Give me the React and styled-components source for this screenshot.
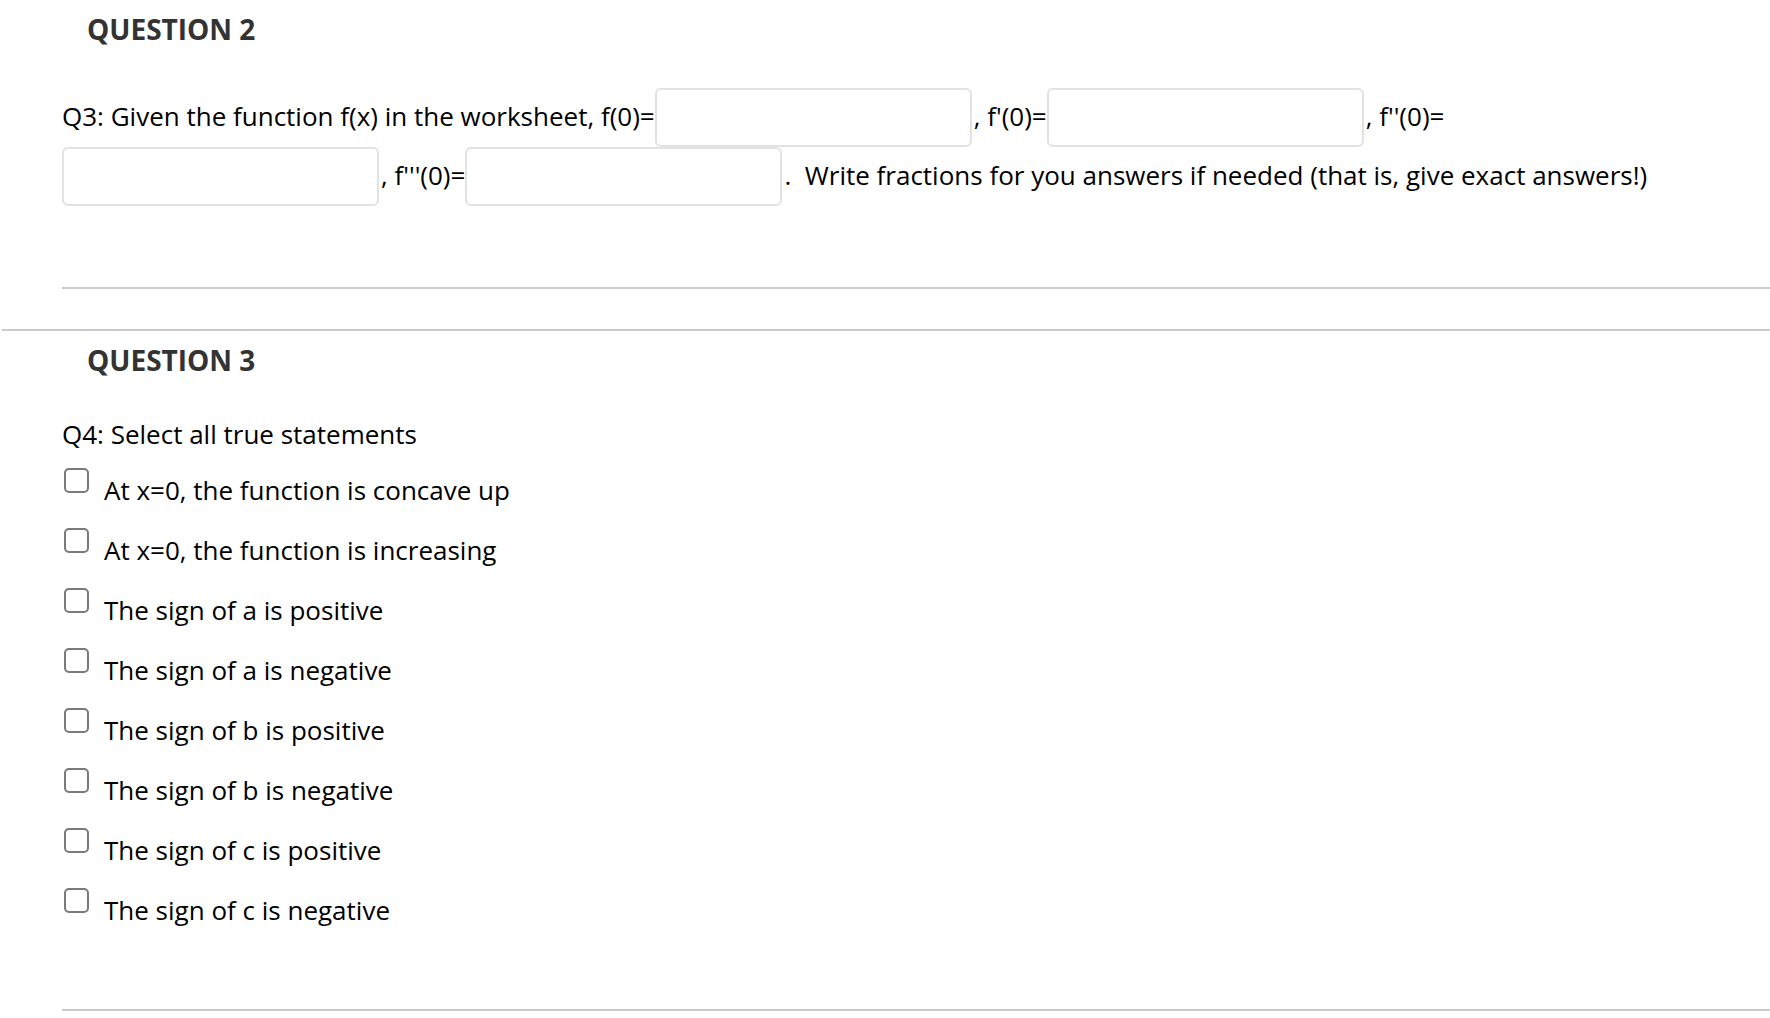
import React from 'react';
import styled, { createGlobalStyle } from 'styled-components';

const GlobalStyle = createGlobalStyle`
    html, body {
        margin: 0;
        padding: 0;
        background: #fff;
    }
    body {
        font-family: "Open Sans", "Liberation Sans", sans-serif;
        color: #000;
    }
`

const Page = styled.div`
    width: 1770px;
    overflow: hidden;
`

const Question = styled.section``

const Heading = styled.h2`
    margin: 10px 0 0 0;
    padding-left: 87px;
    font-size: 28px;
    font-weight: 700;
    line-height: normal;
    color: #333;
`

const Body = styled.div`
    padding-left: 62px;
`

const Prompt = styled.p`
    margin: ${props => props.$top}px 0 0 0;
    padding-right: 24px;
    font-size: 26px;
    line-height: normal;
`

const Answer = styled.input`
    box-sizing: border-box;
    width: 317px;
    height: 59px;
    margin: 0 2px 0 0;
    padding: 0 10px;
    border: 2px solid #e2e2e2;
    border-radius: 6px;
    background: #fff;
    vertical-align: -2px;
    font: inherit;
    outline: none;
`

const Rule = styled.hr`
    height: 2px;
    margin: ${props => props.$top}px 0 0 ${props => props.$left}px;
    border: none;
    background: #cccccc;
`

const Options = styled.div`
    margin-top: 16px;
`

const Option = styled.label`
    display: flex;
    align-items: flex-start;
    height: 60px;
    cursor: pointer;
`

const Box = styled.span`
    box-sizing: border-box;
    flex: none;
    width: 25px;
    height: 25px;
    margin-left: 2px;
    border: 2px solid #7a7a7a;
    border-radius: 5px;
    background: #fff;
`

const OptionText = styled.span`
    padding-top: 4px;
    margin-left: 15px;
    font-size: 26px;
    line-height: normal;
`

const statements = [
    'At x=0, the function is concave up',
    'At x=0, the function is increasing',
    'The sign of a is positive',
    'The sign of a is negative',
    'The sign of b is positive',
    'The sign of b is negative',
    'The sign of c is positive',
    'The sign of c is negative',
];

const App = () => {
    return (
        <Page>
            <GlobalStyle />
            <Question>
                <Heading>QUESTION 2</Heading>
                <Body>
                    <Prompt $top={40}>
                        Q3: Given the function f(x) in the worksheet, f(0)=<Answer />, f'(0)=<Answer />, f''(0)=<Answer />, f'''(0)=<Answer />.&nbsp; Write fractions for you answers if needed (that is, give exact answers!)
                    </Prompt>
                </Body>
                <Rule $top={81} $left={62} />
            </Question>
            <Rule $top={40} $left={2} />
            <Question>
                <Heading>QUESTION 3</Heading>
                <Body>
                    <Prompt $top={37}>Q4: Select all true statements</Prompt>
                    <Options>
                        {statements.map(s => (
                            <Option key={s}>
                                <Box />
                                <OptionText>{s}</OptionText>
                            </Option>
                        ))}
                    </Options>
                </Body>
                <Rule $top={61} $left={62} />
            </Question>
        </Page>
    );
}

export default App;
